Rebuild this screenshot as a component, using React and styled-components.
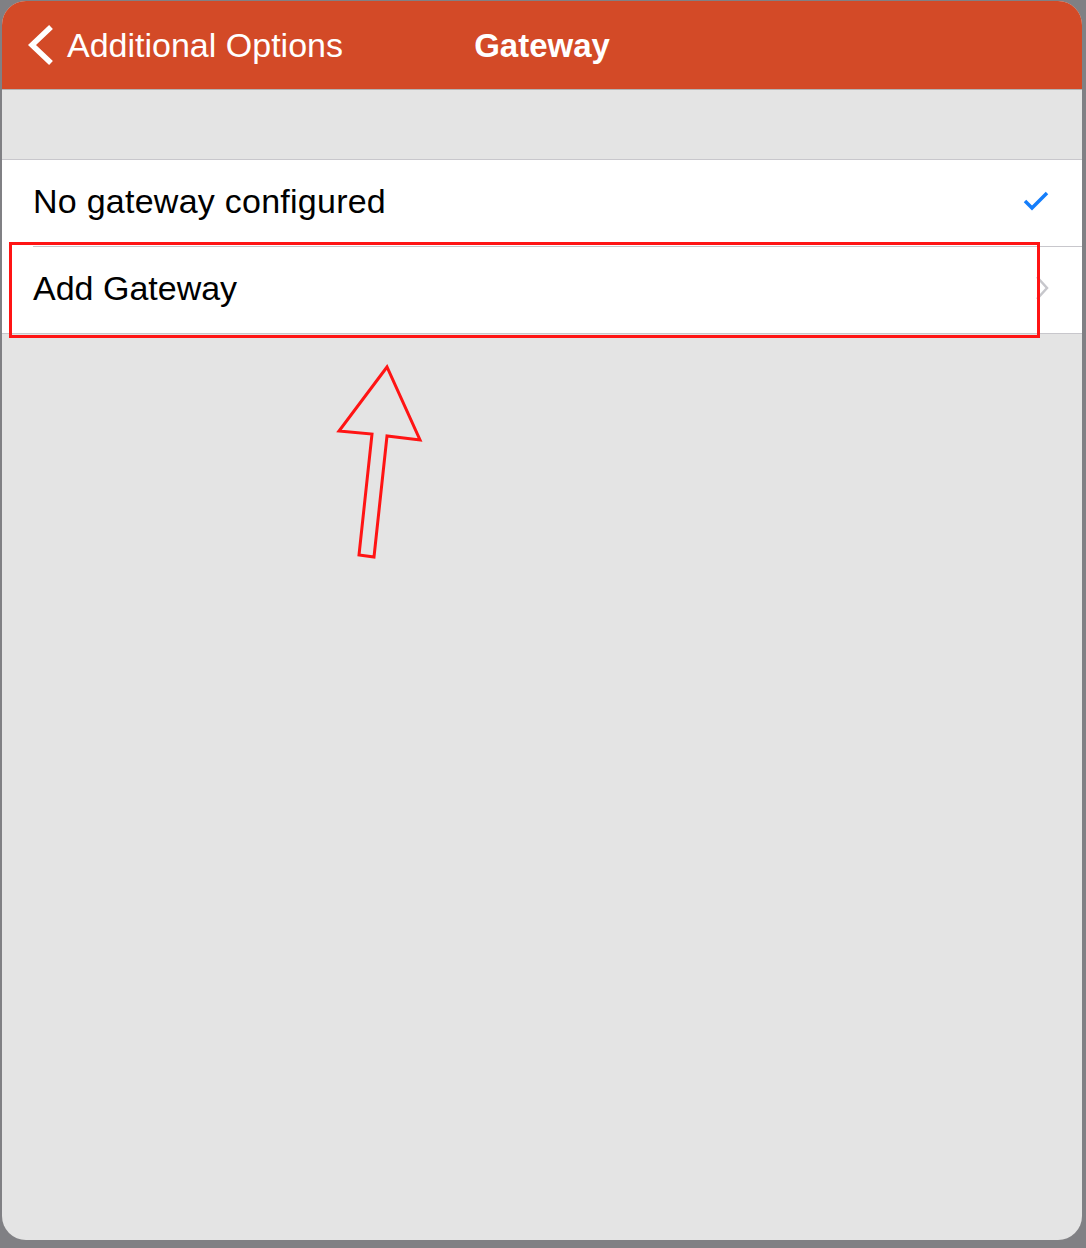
import styled, { createGlobalStyle } from "styled-components";

const GlobalStyle = createGlobalStyle`
  html, body {
    margin: 0;
    padding: 0;
    background: #808084;
  }
  body {
    font-family: "Liberation Sans", Arial, sans-serif;
  }
`;

const Screen = styled.div`
  padding: 1px 4px 8px 2px;
`;

const Panel = styled.div`
  position: relative;
  height: 1239px;
  background: #e4e4e4;
  border-radius: 24px;
  overflow: hidden;
  display: flex;
  flex-direction: column;
`;

const NavBar = styled.div`
  position: relative;
  height: 88px;
  background: #d34a27;
  border-bottom: 1px solid #b3b3b3;
  display: flex;
  align-items: center;
  justify-content: center;
  flex-shrink: 0;
`;

const BackButton = styled.div`
  position: absolute;
  left: 23px;
  top: 0;
  bottom: 0;
  display: flex;
  align-items: center;
  gap: 10px;
  color: white;
  font-size: 34px;
`;

const Title = styled.div`
  color: white;
  font-size: 33px;
  font-weight: bold;
  padding-top: 2px;
`;

const Spacer = styled.div`
  height: 69px;
  flex-shrink: 0;
`;

const List = styled.div`
  background: white;
  border-top: 1px solid #c8c7cc;
  border-bottom: 1px solid #c8c7cc;
`;

const Row = styled.div`
  position: relative;
  height: 86px;
  display: flex;
  align-items: center;
  justify-content: space-between;
  padding: 0 32px 4px 31px;
  box-sizing: border-box;
  font-size: 34px;
  letter-spacing: ${(p) => p.$spacing || "0"};
  color: #000;

  & + & {
    border-top: 1px solid #c8c7cc;
    margin-left: 31px;
    padding-left: 0;
    height: 87px;
  }
`;

const Highlight = styled.div`
  position: absolute;
  left: 7px;
  top: 241px;
  width: 1025px;
  height: 90px;
  border: 3px solid #ff1414;
`;

const Annotation = styled.svg`
  position: absolute;
  left: 330px;
  top: 360px;
`;

const Chevron = () => (
  <svg width="32" height="42" viewBox="0 0 32 42">
    <polyline points="26,3 7,21 26,39" fill="none" stroke="white" strokeWidth="5.5" />
  </svg>
);

const Check = () => (
  <svg width="28" height="24" viewBox="0 0 28 24">
    <polyline points="3,12 10,19 25,4" fill="none" stroke="#157efb" strokeWidth="3.5" />
  </svg>
);

const Disclosure = () => (
  <svg width="16" height="26" viewBox="0 0 16 26">
    <polyline points="3,2 13,13 3,24" fill="none" stroke="#c7c7cc" strokeWidth="2.5" />
  </svg>
);

export default function App() {
  return (
    <>
      <GlobalStyle />
      <Screen>
        <Panel>
          <NavBar>
            <BackButton>
              <Chevron />
              Additional Options
            </BackButton>
            <Title>Gateway</Title>
          </NavBar>
          <Spacer />
          <List>
            <Row $spacing="0.25px">
              No gateway configured
              <Check />
            </Row>
            <Row>
              Add Gateway
              <Disclosure />
            </Row>
          </List>
          <Highlight />
          <Annotation width="100" height="210" viewBox="0 0 100 210">
            <polygon
              points="55,6 7,70 40,73 27,194 42,196 55,75 88,79"
              fill="none"
              stroke="#ff1414"
              strokeWidth="3"
              strokeLinejoin="miter"
            />
          </Annotation>
        </Panel>
      </Screen>
    </>
  );
}
